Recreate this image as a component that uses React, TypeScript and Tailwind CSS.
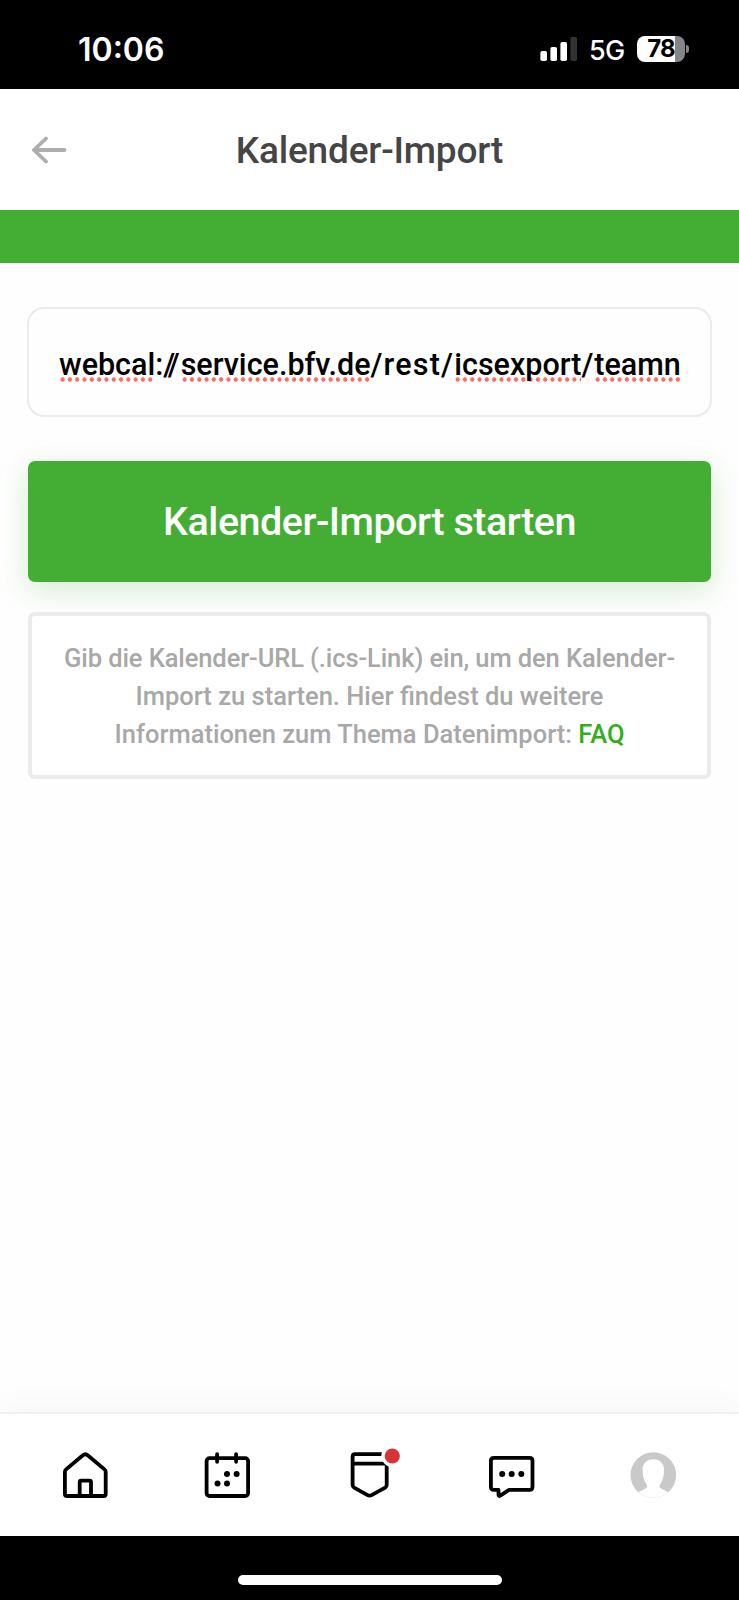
import React from "react";

const navIcon = "size-12 overflow-visible";

function StatusBar() {
  return (
    <div className="flex h-[89px] items-start justify-between bg-black pl-[78px] pr-[50px] pt-[30px] font-['Inter',sans-serif] text-white">
      <span className="text-[32px] leading-10 font-semibold">10:06</span>
      <div className="flex h-[38px] items-center">
        <svg className="h-6 w-[37px]" viewBox="0 0 37 24" fill="white">
          <rect x="0.4" y="14" width="6.6" height="10" rx="1.8" />
          <rect x="10.4" y="10" width="6.6" height="14" rx="1.8" />
          <rect x="20.4" y="5" width="6.6" height="19" rx="1.8" />
          <rect x="30.4" y="0" width="6.6" height="24" rx="1.8" fill="#333" />
        </svg>
        <span className="ml-3 w-12 pt-[3px] text-[27px] leading-[35px] font-medium tracking-[-0.8px]">5G</span>
        <div className="flex h-[26px] w-12 items-center justify-center rounded-[8px] bg-[linear-gradient(to_right,white_38px,#858585_38px)] text-[24px] leading-[26px] font-bold tracking-[-0.8px] text-black">
          78
        </div>
        <div className="ml-px h-2 w-[3px] rounded-r-full bg-[#858585]" />
      </div>
    </div>
  );
}

function Header() {
  return (
    <header className="grid h-[121px] grid-cols-[100px_1fr_100px] items-center bg-white">
      <svg
        className="ml-8 h-7 w-[35px]"
        viewBox="0 0 35 28"
        fill="none"
        stroke="#adadad"
        strokeWidth="3.8"
        strokeLinecap="round"
        strokeLinejoin="round"
      >
        <path d="M32.5 14H2M14 2.5L2 14l12 11.5" />
      </svg>
      <h1 className="pt-0.5 text-center text-[37px] leading-[48px] font-medium tracking-[-0.2px] text-[#454545]">
        Kalender-Import
      </h1>
    </header>
  );
}

// Misspelled words get the iOS style dotted underline
function Misspelled({ children }: { children: string }) {
  return (
    <span className="bg-[radial-gradient(circle,#ff6b63_1.9px,transparent_2.5px)] bg-[length:7.3px_5px] bg-[position:0_100%] bg-repeat-x">
      {children}
    </span>
  );
}

function UrlInput() {
  return (
    <div className="-mx-px flex h-[110px] items-center rounded-[17px] border-2 border-[#ebebeb] pr-7 pl-[30px] pt-1.5">
      <div className="h-10 w-full overflow-hidden text-[30.5px] leading-10 font-medium whitespace-nowrap text-black">
        <Misspelled>webcal</Misspelled>
        <span>:</span>
        <span className="tracking-[-4px]">//</span>
        <span className="ml-[5px]" />
        <Misspelled>service.bfv.de</Misspelled>
        <span className="tracking-[1.2px]">/rest/</span>
        <Misspelled>icsexport</Misspelled>
        <span className="tracking-[1px]">/</span>
        <Misspelled>teamn</Misspelled>
      </div>
    </div>
  );
}

function HomeIcon() {
  return (
    <svg className={navIcon} viewBox="0 0 48 48" fill="none" stroke="black" strokeWidth="3.8" strokeLinejoin="round">
      <path d="M3.9 21q0-1.6 1.2-2.6L21.9 4.2q2.4-2 4.8 0l16.8 14.2q1.2 1 1.2 2.6v22q0 2-2 2H5.9q-2 0-2-2z" />
      <path d="M18.7 45V31.2q0-1.500 1.500-1.500h8.3q1.500 0 1.500 1.500V45" />
    </svg>
  );
}

function CalendarIcon() {
  return (
    <svg className={navIcon} viewBox="0 0 48 48" fill="none" stroke="black" strokeWidth="3.8" strokeLinecap="round">
      <rect x="3.6" y="7.1" width="41.5" height="37.9" rx="3" />
      <path d="M14.1 3.2v7.6M33.1 3.2v7.6" />
      <g fill="black" stroke="none">
        <circle cx="24" cy="23" r="3" />
        <circle cx="33.6" cy="23" r="3" />
        <circle cx="14.500" cy="32.6" r="3" />
        <circle cx="24" cy="32.6" r="3" />
      </g>
    </svg>
  );
}

function TeamIcon() {
  return (
    <svg className={navIcon} viewBox="0 0 48 48" fill="none" stroke="black" strokeWidth="3.8" strokeLinejoin="round">
      <path d="M7.6 5.7Q7.6 3.2 10.1 3.2h29.1q2.5 0 2.5 2.5V34q0 1.7-1.5 2.6l-13.6 7.5q-2 1.1-4 0L9.1 36.6Q7.6 35.7 7.6 34z" />
      <path d="M7.600 12.6h34" />
      <circle cx="47.3" cy="5" r="11" fill="white" stroke="none" />
      <circle cx="47.3" cy="5" r="7.6" fill="#d63438" stroke="none" />
    </svg>
  );
}

function ChatIcon() {
  return (
    <svg className={navIcon} viewBox="0 0 48 48" fill="none" stroke="black" strokeWidth="3.8" strokeLinejoin="round">
      <path d="M6.8 6.9h35.8q2.9 0 2.9 2.9V36q0 2.9-2.9 2.9H22.1l-8.8 5.8q-1.8 1-1.8-1v-4.800H6.8q-2.9 0-2.9-2.9V9.8q0-2.9 2.9-2.9z" />
      <g fill="black" stroke="none">
        <circle cx="15.2" cy="23" r="3" />
        <circle cx="24.7" cy="23" r="3" />
        <circle cx="34.3" cy="23" r="3" />
      </g>
    </svg>
  );
}

function AvatarIcon() {
  return (
    <svg className={navIcon} viewBox="0 0 48 48">
      <circle cx="24.3" cy="24" r="22.8" fill="#c9c9c9" />
      <path
        d="M24.3 8.2c-6.5 0-10.8 4.3-10.8 10.8 0 5.5 1.3 10.6 4 14.4 1.3 2 .7 3.3-1.5 4.4L8.7 41.5q6.6 6 15.6 6t15.6-6l-7.3-3.7c-2.2-1.1-2.8-2.4-1.5-4.4 2.7-3.8 4-8.9 4-14.4 0-6.5-4.3-10.8-10.8-10.8z"
        fill="white"
      />
      <path d="M8.9 41q6.4 5.7 15.4 5.7T39.7 41" fill="none" stroke="#ededed" strokeWidth="0.7" />
    </svg>
  );
}

function BottomNav() {
  return (
    <nav className="grid h-[124px] grid-cols-5 place-items-center border-t-2 border-[#f0f0f0] bg-white pr-[15px] pl-[14px] shadow-[0_-4px_30px_rgba(0,0,0,0.04)]">
      <HomeIcon />
      <CalendarIcon />
      <TeamIcon />
      <ChatIcon />
      <AvatarIcon />
    </nav>
  );
}

export default function App() {
  return (
    <div className="flex h-[1600px] w-[739px] flex-col bg-[#fefefe] font-['Roboto',sans-serif]">
      <StatusBar />
      <Header />
      <div className="h-[53px] bg-[#44ad33]" />
      <main className="flex flex-1 flex-col px-7 pt-11">
        <UrlInput />
        <button className="mt-11 h-[121px] rounded-[7px] bg-[#44ad33] text-[39.5px] font-medium tracking-[-0.5px] text-white shadow-[0_8px_30px_rgba(68,173,51,0.22)]">
          Kalender-Import starten
        </button>
        <div className="mt-[30px] h-[167px] rounded-[7px] border-4 border-[#ebebeb] bg-white pt-[23px] text-center text-[25.5px] leading-[38px] font-medium text-[#a8a8a8]">
          <p className="tracking-[-0.1px]">Gib die Kalender-URL (.ics-Link) ein, um den Kalender-</p>
          <p>Import zu starten. Hier findest du weitere</p>
          <p>
            Informationen zum Thema Datenimport: <a className="text-[#32ad1c]">FAQ</a>
          </p>
        </div>
      </main>
      <BottomNav />
      <div className="flex h-16 items-start justify-center bg-black pt-[39px]">
        <div className="h-[10px] w-[264px] rounded-full bg-white" />
      </div>
    </div>
  );
}
